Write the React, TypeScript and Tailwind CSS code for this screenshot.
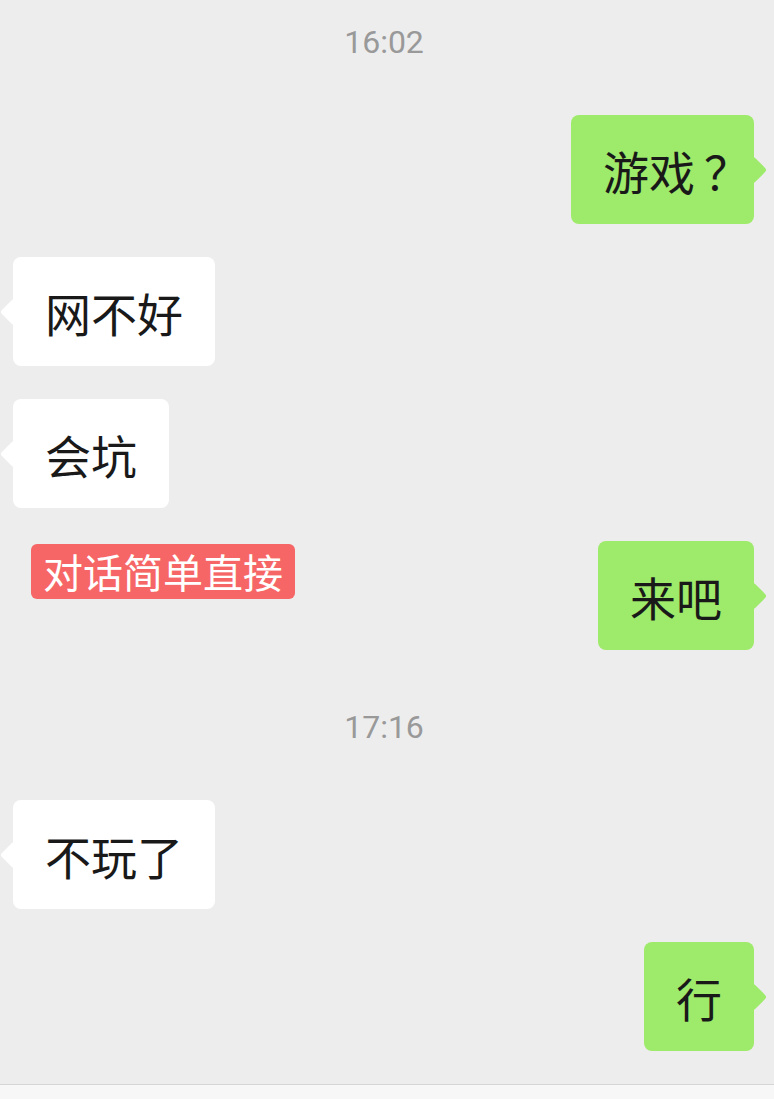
import React from "react";

const font = { fontFamily: '"Noto Sans CJK SC", "Noto Sans", sans-serif' };

function Bubble({ text, side }: { text: React.ReactNode; side: "left" | "right" }) {
  const bg = side === "right" ? "bg-[#9eea6a]" : "bg-white";
  return (
    <div
      className={`relative ${bg} rounded-[8px] h-[109px] px-[32px] flex items-center text-[46px] leading-none text-[#191919] whitespace-nowrap`}
    >
      {side === "right" ? (
        <div className="absolute right-[-9px] top-1/2 -translate-y-1/2 w-[20px] h-[20px] rotate-45 rounded-[3px] bg-[#9eea6a]" />
      ) : (
        <div className="absolute left-[-9px] top-1/2 -translate-y-1/2 w-[20px] h-[20px] rotate-45 rounded-[3px] bg-white" />
      )}
      <span className="relative flex items-center">{text}</span>
    </div>
  );
}

function Time({ t }: { t: string }) {
  return (
    <div
      className="h-[84px] flex items-center justify-center pr-[6px] text-[32px] text-[#999999]"
      style={{ fontFamily: 'Roboto, "Noto Sans", sans-serif' }}
    >
      {t}
    </div>
  );
}

export default function App() {
  return (
    <div className="w-[774px] h-[1099px] bg-[#ededed] flex flex-col overflow-hidden" style={font}>
      <div className="flex-1 flex flex-col">
        <Time t="16:02" />
        <div className="mt-[31px] flex justify-end pr-[20px]">
          <Bubble
            side="right"
            text={
              <>
                <span>游戏</span>
                <span className="inline-block w-[27px] pl-[9px] overflow-visible">？</span>
              </>
            }
          />
        </div>
        <div className="mt-[33px] flex justify-start pl-[13px]">
          <Bubble text="网不好" side="left" />
        </div>
        <div className="mt-[33px] flex justify-start pl-[13px]">
          <Bubble text="会坑" side="left" />
        </div>
        <div className="mt-[33px] flex justify-between items-start pl-[31px] pr-[20px]">
          <div className="mt-[3px] h-[55px] px-[12px] rounded-[6px] bg-[#f66666] text-white text-[40px] leading-[55px]">
            对话简单直接
          </div>
          <Bubble text="来吧" side="right" />
        </div>
        <div className="mt-[35px]">
          <Time t="17:16" />
        </div>
        <div className="mt-[31px] flex justify-start pl-[13px]">
          <Bubble text="不玩了" side="left" />
        </div>
        <div className="mt-[33px] flex justify-end pr-[20px]">
          <Bubble text="行" side="right" />
        </div>
      </div>
      <div className="h-[15px] border-t border-[#d6d6d6] bg-[#f7f7f7]" />
    </div>
  );
}
